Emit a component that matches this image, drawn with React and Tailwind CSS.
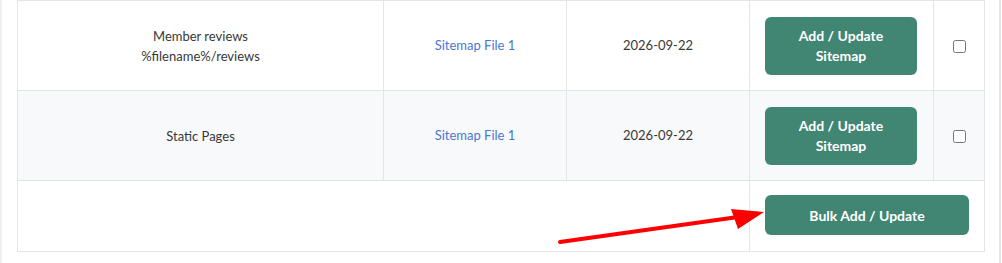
import React from 'react';

const rows = [
  { name: ['Member reviews', '%filename%/reviews'], file: 'Sitemap File 1', date: '2026-09-22', bg: 'bg-white' },
  { name: ['Static Pages'], file: 'Sitemap File 1', date: '2026-09-22', bg: 'bg-[#f8f9fb]' },
];

const App = () => {
  return (
    <div className="relative w-[1002px] h-[263px] bg-white flex overflow-hidden text-[13px] text-[#383838]" style={{ fontFamily: 'Lato, sans-serif' }}>
      <div className="w-[2px] h-full bg-[#eef0f5]"></div>
      <div className="pl-[15px] pr-[14px]">
        <table className="w-[967px] border-collapse table-fixed">
          <tbody>
            {rows.map((r, i) => (
              <tr key={i} className={`${r.bg} h-[90px]`}>
                <td className="w-[366px] border border-[#e4e5e8] text-center leading-[20px]">
                  {r.name.map((n) => (
                    <div key={n}>{n}</div>
                  ))}
                </td>
                <td className="w-[183px] border border-[#e4e5e8] text-center">
                  <a className="text-[#4a76d4]">{r.file}</a>
                </td>
                <td className="w-[183px] border border-[#e4e5e8] text-center">{r.date}</td>
                <td className="w-[184px] border border-[#e4e5e8] pl-[15px]">
                  <button className="w-[152px] h-[58px] rounded-[6px] bg-[#418673] text-white text-[14px] font-bold leading-[20px] px-4">
                    Add / Update Sitemap
                  </button>
                </td>
                <td className="w-[51px] border border-[#e4e5e8] text-center">
                  <input type="checkbox" className="w-[13px] h-[13px] align-middle" />
                </td>
              </tr>
            ))}
            <tr className="h-[71px]">
              <td colSpan={3} className="border border-[#e4e5e8]"></td>
              <td colSpan={2} className="border border-[#e4e5e8] pl-[15px] pb-[2px]">
                <button className="w-[204px] h-[40px] rounded-[6px] bg-[#418673] text-white text-[14px] font-bold">
                  Bulk Add / Update
                </button>
              </td>
            </tr>
          </tbody>
        </table>
      </div>
      <div className="w-[2px] h-full bg-[#e6e7ea]"></div>

      <svg className="absolute left-0 top-0 pointer-events-none" width="1002" height="263">
        <line x1="560" y1="242" x2="738" y2="217" stroke="#ff0000" strokeWidth="4" strokeLinecap="round" />
        <polygon points="731,209 764,212 738,229" fill="#ff0000" />
      </svg>
    </div>
  );
};

export default App;
